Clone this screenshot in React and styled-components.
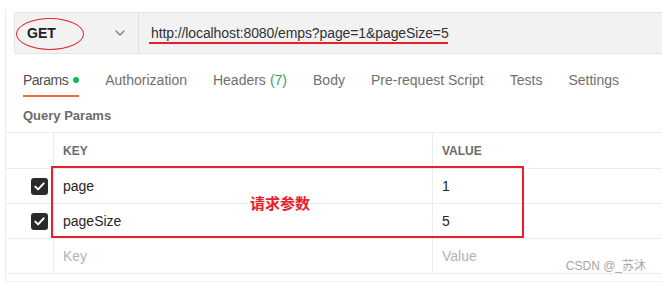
import React from 'react';
import styled, { createGlobalStyle } from 'styled-components';

const GlobalStyle = createGlobalStyle`
  html, body {
    margin: 0;
    padding: 0;
    background: #ffffff;
  }
  body {
    font-family: "Liberation Sans", Arial, sans-serif;
    color: #212121;
  }
`;

const tabs = [
  { label: 'Params', active: true, dot: true },
  { label: 'Authorization' },
  { label: 'Headers', count: 7 },
  { label: 'Body' },
  { label: 'Pre-request Script' },
  { label: 'Tests' },
  { label: 'Settings' },
];

const params = [
  { key: 'page', value: '1' },
  { key: 'pageSize', value: '5' },
];

function Chevron() {
  return (
    <svg width="10" height="6" viewBox="0 0 10 6" fill="none">
      <path d="M1 1l4 4 4-4" stroke="#7a7a7a" strokeWidth="1.3" strokeLinecap="round" strokeLinejoin="round" />
    </svg>
  );
}

function Check() {
  return (
    <svg width="11" height="9" viewBox="0 0 11 9" fill="none">
      <path d="M1.3 4.6l2.8 2.8 5.6-6" stroke="#ffffff" strokeWidth="2" strokeLinecap="round" strokeLinejoin="round" />
    </svg>
  );
}

function App() {
  return (
    <>
      <GlobalStyle />
      <Page>
        <Frame>
          <UrlBar>
            <MethodBox>
              <Method>GET</Method>
              <Chevron />
            </MethodBox>
            <UrlField>http://localhost:8080/emps?page=1&amp;pageSize=5</UrlField>
          </UrlBar>

          <TabBar>
            {tabs.map((t) => (
              <Tab key={t.label} $active={t.active}>
                {t.label}
                {t.count !== undefined && <Count>({t.count})</Count>}
                {t.dot && <Dot />}
              </Tab>
            ))}
          </TabBar>

          <SectionTitle>Query Params</SectionTitle>

          <Table>
            <Row $head>
              <CheckCell />
              <KeyCell><HeadText>KEY</HeadText></KeyCell>
              <ValueCell><HeadText>VALUE</HeadText></ValueCell>
            </Row>
            {params.map((p) => (
              <Row key={p.key}>
                <CheckCell>
                  <CheckBox><Check /></CheckBox>
                </CheckCell>
                <KeyCell>{p.key}</KeyCell>
                <ValueCell>{p.value}</ValueCell>
              </Row>
            ))}
            <Row>
              <CheckCell />
              <KeyCell><Placeholder>Key</Placeholder></KeyCell>
              <ValueCell><Placeholder>Value</Placeholder></ValueCell>
            </Row>
          </Table>
        </Frame>

        {/* red annotations drawn on top of the screenshot */}
        <Ellipse />
        <UrlMark />
        <ParamsMark>
          <MarkLabel>请求参数</MarkLabel>
        </ParamsMark>
        <Watermark>CSDN @_苏沐</Watermark>
      </Page>
    </>
  );
}

const Page = styled.div`
  position: relative;
  width: 662px;
  height: 282px;
  overflow: hidden;
  padding: 10px 0 0 5px;
  box-sizing: border-box;
`;

const Frame = styled.div`
  border-left: 1px solid #ebebeb;
  border-bottom: 1px solid #efefef;
  height: 272px;
  box-sizing: border-box;
  padding-top: 2px;
`;

const UrlBar = styled.div`
  margin-left: 8px;
  height: 42px;
  display: flex;
  background: #f2f2f2;
  border: 1px solid #e4e4e4;
  border-right: none;
  border-radius: 4px 0 0 4px;
  box-sizing: border-box;
`;

const MethodBox = styled.div`
  width: 124px;
  box-sizing: border-box;
  display: flex;
  align-items: center;
  justify-content: space-between;
  padding: 0 13px 0 12px;
  border-right: 1px solid #e0e0e0;
`;

const Method = styled.span`
  font-size: 14px;
  font-weight: 700;
  color: #212121;
`;

const UrlField = styled.div`
  display: flex;
  align-items: center;
  padding-left: 12px;
  font-size: 14px;
  color: #333333;
  letter-spacing: -0.1px;
`;

const TabBar = styled.div`
  display: flex;
  gap: 26px;
  margin-top: 10px;
  padding-left: 17px;
  height: 33px;
`;

const Tab = styled.div`
  display: flex;
  align-items: center;
  height: 33px;
  box-sizing: border-box;
  font-size: 14px;
  letter-spacing: ${(p) => (p.$active ? '-0.5px' : '0')};
  color: ${(p) => (p.$active ? '#505050' : '#707070')};
  border-bottom: 2px solid ${(p) => (p.$active ? '#f26b3a' : 'transparent')};
  white-space: nowrap;
`;

const Count = styled.span`
  margin-left: 4px;
  color: #3d9a6b;
`;

const Dot = styled.span`
  width: 6px;
  height: 6px;
  border-radius: 50%;
  background: #0cbb52;
  margin-left: 5px;
  margin-top: 1px;
`;

const SectionTitle = styled.div`
  padding: 10px 0 7px 17px;
  line-height: 18px;
  font-size: 13px;
  font-weight: 700;
  color: #6b6b6b;
`;

const Table = styled.div`
  border-top: 1px solid #ececec;
`;

const Row = styled.div`
  display: grid;
  grid-template-columns: 48px 379px 1fr;
  height: ${(p) => (p.$head ? '36px' : '35px')};
  box-sizing: border-box;
  border-bottom: 1px solid #ececec;
  font-size: 14px;
  color: #262626;
`;

const Cell = styled.div`
  display: flex;
  align-items: center;
  box-sizing: border-box;
`;

const CheckCell = styled(Cell)`
  justify-content: flex-end;
  padding-right: 5px;
  border-right: 1px solid #ececec;
`;

const KeyCell = styled(Cell)`
  padding-left: 9px;
  border-right: 1px solid #ececec;
`;

const ValueCell = styled(Cell)`
  padding-left: 9px;
`;

const HeadText = styled.span`
  font-size: 12px;
  font-weight: 700;
  color: #6b6b6b;
`;

const Placeholder = styled.span`
  color: #b3b3b3;
`;

const CheckBox = styled.span`
  width: 17px;
  height: 17px;
  border-radius: 3px;
  background: #2a2a2a;
  display: flex;
  align-items: center;
  justify-content: center;
`;

const Ellipse = styled.div`
  position: absolute;
  left: 16px;
  top: 18px;
  width: 66px;
  height: 30px;
  border: 1.5px solid #e0262f;
  border-radius: 50%;
`;

const UrlMark = styled.div`
  position: absolute;
  left: 149px;
  top: 42px;
  width: 299px;
  height: 2px;
  background: #e8202b;
`;

const ParamsMark = styled.div`
  position: absolute;
  left: 51px;
  top: 166px;
  width: 473px;
  height: 72px;
  border: 2px solid #e8202b;
  box-sizing: border-box;
`;

const MarkLabel = styled.span`
  position: absolute;
  left: 197px;
  top: 24px;
  font-family: "Noto Sans CJK SC", sans-serif;
  font-size: 15px;
  font-weight: 700;
  color: #e8202b;
  line-height: 22px;
`;

const Watermark = styled.div`
  position: absolute;
  right: 16px;
  top: 258px;
  font-family: "Liberation Sans", "Noto Sans CJK SC", sans-serif;
  font-size: 12px;
  color: #a6a6a6;
  line-height: 16px;
`;

export default App;
